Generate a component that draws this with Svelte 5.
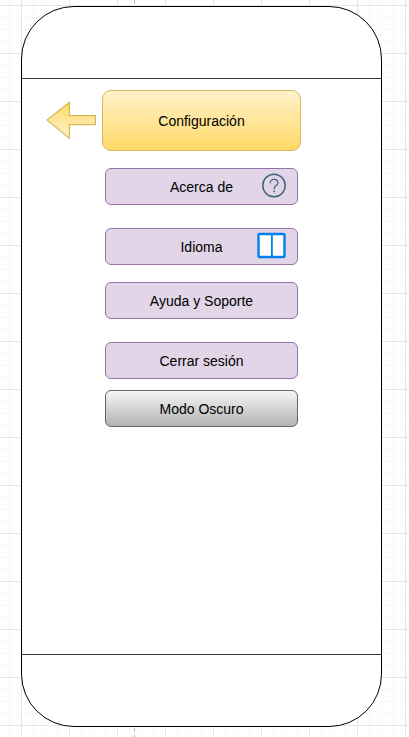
<script>
  const items = [
    { label: 'Acerca de', icon: 'help' },
    { label: 'Idioma', icon: 'book', gap: 'wide' },
    { label: 'Ayuda y Soporte' },
    { label: 'Cerrar sesión', gap: 'wide' },
    { label: 'Modo Oscuro', gap: 'tight', dark: true }
  ];
</script>

<div class="canvas">
  <main class="phone">
    <div class="bar top"></div>
    <div class="screen">
      <header>
        <button class="back" aria-label="Volver">
          <svg width="50" height="38" viewBox="0 0 50 38" aria-hidden="true">
            <defs>
              <linearGradient id="arrow-fill" x1="0" y1="0" x2="0" y2="1">
                <stop offset="0" stop-color="#ffd966" />
                <stop offset="1" stop-color="#fff2cc" />
              </linearGradient>
            </defs>
            <path d="M49.4 13.6H23.4V0.2L1 18.1L23.4 36.2V22.6H49.4Z" fill="url(#arrow-fill)" stroke="#d6b656" stroke-width="1.2" />
          </svg>
        </button>
        <h1>Configuración</h1>
      </header>
      <nav>
        {#each items as item}
          <button class="item {item.gap ?? ''}" class:dark={item.dark}>
            <span class="label">{item.label}</span>
            {#if item.icon === 'help'}
              <svg class="icon" width="29" height="35" viewBox="0 0 29 35" fill="none" aria-hidden="true">
                <circle cx="17" cy="16.5" r="11.2" stroke="#43647f" stroke-width="1.5" />
                <path d="M13.2 14.2C13.2 11.8 14.8 10.3 17.1 10.3C19.3 10.3 20.9 11.7 20.9 13.7C20.9 16.6 17.1 16.6 17.1 20.2" stroke="#43647f" stroke-width="1.3" />
                <rect x="16.3" y="21.6" width="1.6" height="1.7" fill="#43647f" />
              </svg>
            {:else if item.icon === 'book'}
              <svg class="icon" width="29" height="35" viewBox="0 0 29 35" aria-hidden="true">
                <rect x="1.5" y="5" width="26" height="23" rx="1" fill="#fff" stroke="#0080f0" stroke-width="2.4" />
                <path d="M14.9 5V28" stroke="#0080f0" stroke-width="1.8" />
              </svg>
            {/if}
          </button>
        {/each}
      </nav>
    </div>
    <div class="bar bottom"></div>
  </main>
</div>

<style>
  :global(body) {
    margin: 0;
    background: #fff;
  }

  .canvas {
    position: relative;
    box-sizing: border-box;
    min-height: 100vh;
    padding: 6px 27px 10px 21px;
    display: flex;
    font-family: 'Liberation Sans', Arial, sans-serif;
    background-color: #fff;
    background-image:
      linear-gradient(#e5e5e5 1px, transparent 1px),
      linear-gradient(90deg, #e5e5e5 1px, transparent 1px),
      linear-gradient(#f8f8f8 1px, transparent 1px),
      linear-gradient(90deg, #f8f8f8 1px, transparent 1px);
    background-size: 48px 48px, 48px 48px, 12px 12px, 12px 12px;
    background-position: 21px 5px;
  }

  /* Page break guide of the drawing canvas */
  .canvas::before {
    content: '';
    position: absolute;
    top: 0;
    bottom: 0;
    left: 134px;
    width: 1px;
    background: repeating-linear-gradient(#bbb 0 4px, transparent 4px 7px);
  }

  .phone {
    position: relative;
    flex: 1;
    display: flex;
    flex-direction: column;
    border: 1px solid #000;
    border-radius: 53px;
    background: #fff;
    overflow: hidden;
  }

  .bar {
    height: 71px;
    flex: none;
    border: 0 solid #333;
  }

  .bar.top {
    border-bottom-width: 1px;
  }

  .bar.bottom {
    border-top-width: 1px;
  }

  .screen {
    flex: 1;
    padding: 11px 0;
  }

  header {
    display: grid;
    grid-template-columns: 1fr 199px 1fr;
    column-gap: 6px;
    align-items: center;
  }

  .back {
    justify-self: end;
    padding: 0;
    border: 0;
    background: none;
    cursor: pointer;
  }

  .back svg {
    display: block;
    overflow: visible;
  }

  h1 {
    margin: 0;
    box-sizing: border-box;
    height: 61px;
    display: grid;
    place-items: center;
    border: 1px solid #d6b656;
    border-radius: 9px;
    background: linear-gradient(#fff2cc, #ffd966);
    font-size: 14px;
    font-weight: 400;
    color: #000;
  }

  nav {
    margin-top: 17px;
    display: flex;
    flex-direction: column;
    align-items: center;
  }

  .item {
    box-sizing: border-box;
    width: 193px;
    height: 37px;
    margin: 17px 0 0;
    padding: 0 11px;
    display: grid;
    grid-template-columns: 1fr auto 1fr;
    align-items: center;
    border: 1px solid #9673a6;
    border-radius: 6px;
    background: #e1d5e7;
    font: 14px 'Liberation Sans', Arial, sans-serif;
    color: #000;
    cursor: pointer;
  }

  .item:first-child {
    margin-top: 0;
  }

  .item.wide {
    margin-top: 23px;
  }

  .item.tight {
    margin-top: 11px;
  }

  .item.dark {
    border-color: #666;
    background: linear-gradient(#f5f5f5, #b3b3b3);
  }

  .label {
    grid-column: 2;
  }

  .icon {
    grid-column: 3;
    justify-self: end;
    display: block;
  }
</style>
